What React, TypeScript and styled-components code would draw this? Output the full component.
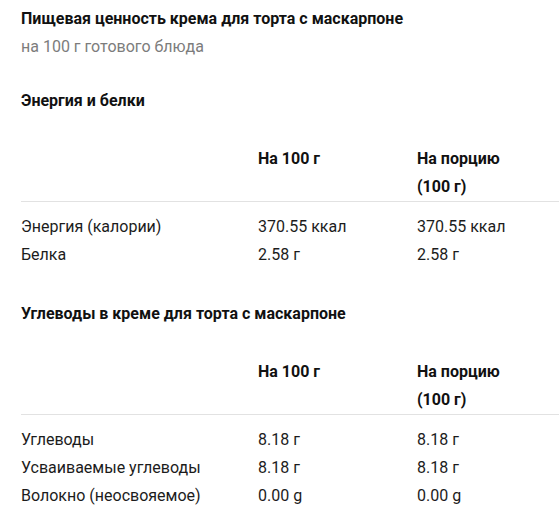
import styled, { createGlobalStyle } from "styled-components";

const GlobalStyle = createGlobalStyle`
  body {
    margin: 0;
    background: #ffffff;
    font-family: Roboto, "Liberation Sans", Arial, sans-serif;
    color: #1c1c1c;
  }
`;

const Page = styled.div`
  padding: 5px 0 0 21px;
  overflow: hidden;
`;

const Title = styled.h1`
  margin: 0;
  font-size: 16px;
  font-weight: 700;
  line-height: 28px;
  color: #111111;
`;

const Subtitle = styled.div`
  font-size: 16px;
  line-height: 28px;
  color: #7c7c7c;
`;

const SectionTitle = styled.h2<{ $top: number }>`
  margin: ${(p) => p.$top}px 0 0;
  font-size: 16px;
  font-weight: 700;
  line-height: 28px;
  color: #111111;
`;

const Table = styled.div`
  margin-top: 30px;
  display: grid;
  grid-template-columns: 237px 159px 1fr;
`;

const HeadCell = styled.div`
  border-bottom: 1px solid #e2e2e2;
`;

const HeadLabel = styled.div<{ $narrow?: boolean }>`
  font-size: 16px;
  font-weight: 700;
  line-height: 28px;
  color: #111111;
  max-width: ${(p) => (p.$narrow ? "100px" : "none")};
`;

const Cell = styled.div<{ $first?: boolean }>`
  font-size: 16px;
  line-height: 28px;
  padding-top: ${(p) => (p.$first ? "11px" : "0")};
  color: #1c1c1c;
`;

type Row = [string, string, string];

const NutritionTable = ({ rows }: { rows: Row[] }) => (
  <Table>
    <HeadCell />
    <HeadCell>
      <HeadLabel>На 100 г</HeadLabel>
    </HeadCell>
    <HeadCell>
      <HeadLabel $narrow>На порцию (100 г)</HeadLabel>
    </HeadCell>
    {rows.map((row, i) =>
      row.map((value, j) => (
        <Cell key={`${i}-${j}`} $first={i === 0}>
          {value}
        </Cell>
      ))
    )}
  </Table>
);

const energyRows: Row[] = [
  ["Энергия (калории)", "370.55 ккал", "370.55 ккал"],
  ["Белка", "2.58 г", "2.58 г"],
];

const carbRows: Row[] = [
  ["Углеводы", "8.18 г", "8.18 г"],
  ["Усваиваемые углеводы", "8.18 г", "8.18 г"],
  ["Волокно (неосвояемое)", "0.00 g", "0.00 g"],
];

const App = () => (
  <>
    <GlobalStyle />
    <Page>
      <Title>Пищевая ценность крема для торта с маскарпоне</Title>
      <Subtitle>на 100 г готового блюда</Subtitle>
      <SectionTitle $top={26}>Энергия и белки</SectionTitle>
      <NutritionTable rows={energyRows} />
      <SectionTitle $top={31}>Углеводы в креме для торта с маскарпоне</SectionTitle>
      <NutritionTable rows={carbRows} />
    </Page>
  </>
);

export default App;
